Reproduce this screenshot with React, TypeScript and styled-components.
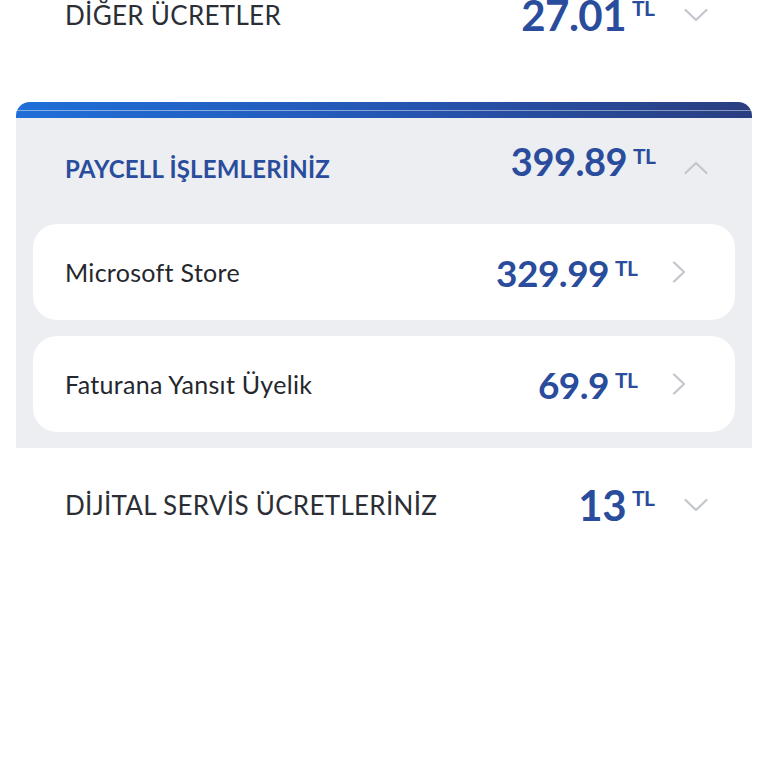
import styled, { createGlobalStyle } from "styled-components";

const GlobalStyle = createGlobalStyle`
  html, body {
    margin: 0;
    padding: 0;
    background: #ffffff;
  }
  body {
    font-family: "Lato", "Noto Sans", sans-serif;
    overflow: hidden;
  }
`;

const Page = styled.div`
  width: 768px;
  height: 768px;
  display: flex;
  flex-direction: column;
  overflow: hidden;
`;

const Row = styled.div<{ $height: number; $offset?: number }>`
  box-sizing: border-box;
  display: flex;
  align-items: center;
  justify-content: space-between;
  height: ${(p) => p.$height}px;
  margin-top: ${(p) => p.$offset || 0}px;
  padding: 0 60px 0 65px;
  flex-shrink: 0;
`;

const Title = styled.span<{ $accent?: boolean }>`
  font-size: ${(p) => (p.$accent ? 24 : 26)}px;
  font-weight: ${(p) => (p.$accent ? 700 : 400)};
  color: ${(p) => (p.$accent ? "#2a4c9c" : "#2b2e35")};
  letter-spacing: ${(p) => (p.$accent ? 0.2 : 0.3)}px;
`;

const Right = styled.div`
  display: flex;
  align-items: center;
`;

const Amount = styled.span<{ $size: number; $raise?: number }>`
  display: flex;
  align-items: flex-start;
  font-size: ${(p) => p.$size}px;
  font-weight: 700;
  color: #2a4c9c;
  line-height: 1;
  letter-spacing: -0.5px;
  margin-bottom: ${(p) => (p.$raise || 0) * 2}px;
`;

const Currency = styled.span`
  font-size: 21px;
  font-weight: 700;
  line-height: 1;
  margin-left: 6px;
  margin-top: 3px;
  letter-spacing: -0.8px;
`;

const Chevron = styled.span<{ $gap: number }>`
  display: flex;
  margin-left: ${(p) => p.$gap}px;
  color: #c3c6cc;
`;

const Panel = styled.div`
  margin: 57px 16px 0;
  background: #eceef2;
  border-radius: 14px 14px 0 0;
  overflow: hidden;
  flex-shrink: 0;
`;

const TopBar = styled.div`
  height: 16px;
  background:
    linear-gradient(to bottom, transparent 8px, rgba(255, 255, 255, 0.45) 8px, rgba(255, 255, 255, 0.45) 9px, transparent 9px),
    linear-gradient(to right, #1f6fd8, #2556b4 50%, #2a3e80);
`;

const PanelHeader = styled(Row)`
  padding: 0 44px 6px 49px;
`;

const CardList = styled.div`
  display: flex;
  flex-direction: column;
  gap: 16px;
  padding: 0 17px 16px;
`;

const Card = styled.div`
  display: flex;
  align-items: center;
  justify-content: space-between;
  height: 96px;
  background: #ffffff;
  border-radius: 24px;
  padding: 0 49px 0 32px;
`;

const CardLabel = styled.span`
  font-size: 25px;
  font-weight: 400;
  color: #24272d;
  letter-spacing: 0.3px;
`;

const Down = () => (
  <svg width="24" height="14" viewBox="0 0 24 14" fill="none">
    <path d="M1.5 2 L12 12 L22.5 2" stroke="currentColor" strokeWidth="2.2" strokeLinecap="round" strokeLinejoin="round" />
  </svg>
);

const Up = () => (
  <svg width="24" height="14" viewBox="0 0 24 14" fill="none">
    <path d="M1.5 12 L12 2 L22.5 12" stroke="currentColor" strokeWidth="2.2" strokeLinecap="round" strokeLinejoin="round" />
  </svg>
);

const RightArrow = () => (
  <svg width="14" height="22" viewBox="0 0 14 22" fill="none">
    <path d="M2 1.5 L12 11 L2 20.5" stroke="currentColor" strokeWidth="2.2" strokeLinecap="round" strokeLinejoin="round" />
  </svg>
);

const items = [
  { label: "Microsoft Store", amount: "329.99" },
  { label: "Faturana Yansıt Üyelik", amount: "69.9" },
];

const App = () => {
  return (
    <Page>
      <GlobalStyle />
      <Row $height={60} $offset={-15}>
        <Title>DİĞER ÜCRETLER</Title>
        <Right>
          <Amount $size={42}>
            27.01<Currency>TL</Currency>
          </Amount>
          <Chevron $gap={30}>
            <Down />
          </Chevron>
        </Right>
      </Row>

      <Panel>
        <TopBar />
        <PanelHeader $height={106}>
          <Title $accent>PAYCELL İŞLEMLERİNİZ</Title>
          <Right>
            <Amount $size={38} $raise={7}>
              399.89<Currency>TL</Currency>
            </Amount>
            <Chevron $gap={29}>
              <Up />
            </Chevron>
          </Right>
        </PanelHeader>
        <CardList>
          {items.map((item, index) => (
            <Card key={index}>
              <CardLabel>{item.label}</CardLabel>
              <Right>
                <Amount $size={37}>
                  {item.amount}
                  <Currency>TL</Currency>
                </Amount>
                <Chevron $gap={35}>
                  <RightArrow />
                </Chevron>
              </Right>
            </Card>
          ))}
        </CardList>
      </Panel>

      <Row $height={114}>
        <Title>DİJİTAL SERVİS ÜCRETLERİNİZ</Title>
        <Right>
          <Amount $size={42}>
            13<Currency>TL</Currency>
          </Amount>
          <Chevron $gap={30}>
            <Down />
          </Chevron>
        </Right>
      </Row>
    </Page>
  );
};

export default App;
